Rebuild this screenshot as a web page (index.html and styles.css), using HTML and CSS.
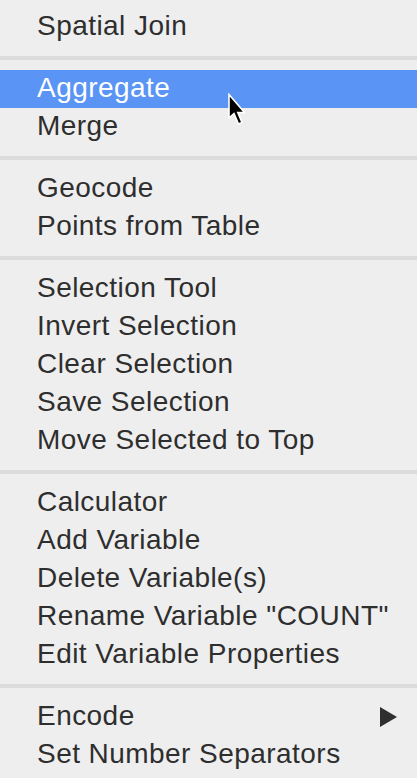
FILE: index.html
```html
<!DOCTYPE html>
<html>
<head>
<meta charset="utf-8">
<link rel="stylesheet" href="styles.css">
</head>
<body>
<div class="menu">
  <div class="item">Spatial Join</div>
  <div class="sep"></div>
  <div class="item active">Aggregate</div>
  <div class="item">Merge</div>
  <div class="sep"></div>
  <div class="item">Geocode</div>
  <div class="item">Points from Table</div>
  <div class="sep"></div>
  <div class="item">Selection Tool</div>
  <div class="item">Invert Selection</div>
  <div class="item">Clear Selection</div>
  <div class="item">Save Selection</div>
  <div class="item">Move Selected to Top</div>
  <div class="sep"></div>
  <div class="item">Calculator</div>
  <div class="item">Add Variable</div>
  <div class="item">Delete Variable(s)</div>
  <div class="item">Rename Variable "COUNT"</div>
  <div class="item">Edit Variable Properties</div>
  <div class="sep"></div>
  <div class="item submenu"><span>Encode</span><svg class="arrow" width="17" height="20" viewBox="0 0 17 20"><path d="M0,0 L17,10 L0,20 Z" fill="#2f2f2f"/></svg></div>
  <div class="item">Set Number Separators</div>
</div>
<svg class="cursor" width="22" height="36" viewBox="0 0 22 36"><path d="M2,1.5 L2,25 L7,20.5 L11.5,31 L15,29.5 L10.8,19.5 L17.5,19.5 Z" fill="#000" stroke="#fff" stroke-width="1.6" stroke-linejoin="miter"/></svg>
</body>
</html>
```
FILE: styles.css
```css
html, body {
  margin: 0;
  padding: 0;
  background: #eeeeee;
}
body {
  width: 417px;
  height: 778px;
  overflow: hidden;
  position: relative;
  font-family: "Liberation Sans", Arial, sans-serif;
}
.menu {
  display: flex;
  flex-direction: column;
  padding-top: 8px;
}
.item {
  height: 36px;
  line-height: 36px;
  padding: 0 20px 2px 37px;
  font-size: 28px;
  letter-spacing: 0.45px;
  color: #2e2e2e;
  white-space: nowrap;
}
.item.active {
  background: #5a94f5;
  color: #ffffff;
}
.submenu {
  display: flex;
  justify-content: space-between;
  align-items: center;
}
.arrow {
  margin-top: 2px;
}
.sep {
  height: 4px;
  margin: 10px 0;
  background: #dcdcdc;
}
.cursor {
  position: absolute;
  left: 227px;
  top: 93px;
}
```
